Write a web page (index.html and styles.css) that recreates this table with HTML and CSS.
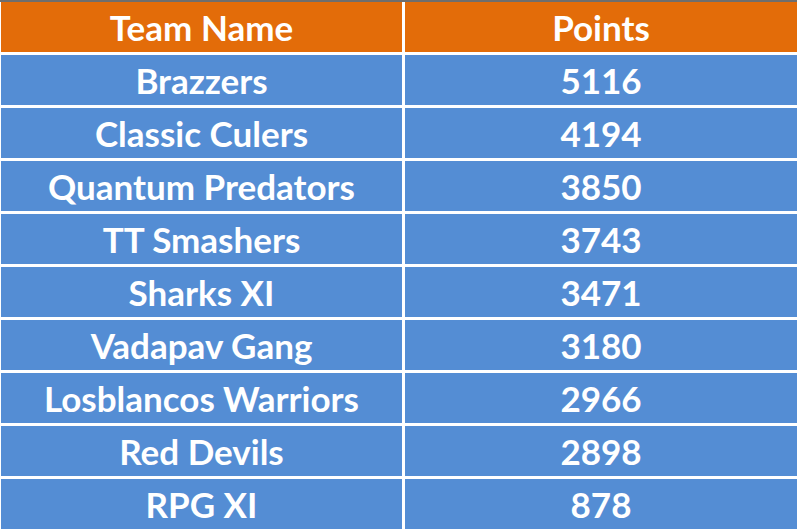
FILE: index.html
```html
<!DOCTYPE html>
<html>
<head>
<meta charset="utf-8">
<link rel="stylesheet" href="styles.css">
</head>
<body>
<div class="topline"></div>
<div class="table">
  <div class="cell head">Team Name</div>
  <div class="cell head">Points</div>
  <div class="cell">Brazzers</div>
  <div class="cell">5116</div>
  <div class="cell">Classic Culers</div>
  <div class="cell">4194</div>
  <div class="cell">Quantum Predators</div>
  <div class="cell">3850</div>
  <div class="cell">TT Smashers</div>
  <div class="cell">3743</div>
  <div class="cell">Sharks XI</div>
  <div class="cell">3471</div>
  <div class="cell">Vadapav Gang</div>
  <div class="cell">3180</div>
  <div class="cell">Losblancos Warriors</div>
  <div class="cell">2966</div>
  <div class="cell">Red Devils</div>
  <div class="cell">2898</div>
  <div class="cell">RPG XI</div>
  <div class="cell">878</div>
</div>
</body>
</html>
```
FILE: styles.css
```css
html, body {
  margin: 0;
  padding: 0;
  background: #ffffff;
  overflow: hidden;
}
.topline {
  height: 2px;
  background: #6e6e6e;
}
.table {
  display: grid;
  grid-template-columns: 401px 1fr;
  grid-auto-rows: 50px;
  column-gap: 3px;
  row-gap: 3px;
  padding-left: 1px;
}
.cell {
  background: #548dd4;
  color: #ffffff;
  font-family: Lato, "Open Sans", sans-serif;
  font-weight: 700;
  font-size: 35px;
  display: flex;
  align-items: center;
  justify-content: center;
}
.cell.head {
  background: #e36c09;
}
```
